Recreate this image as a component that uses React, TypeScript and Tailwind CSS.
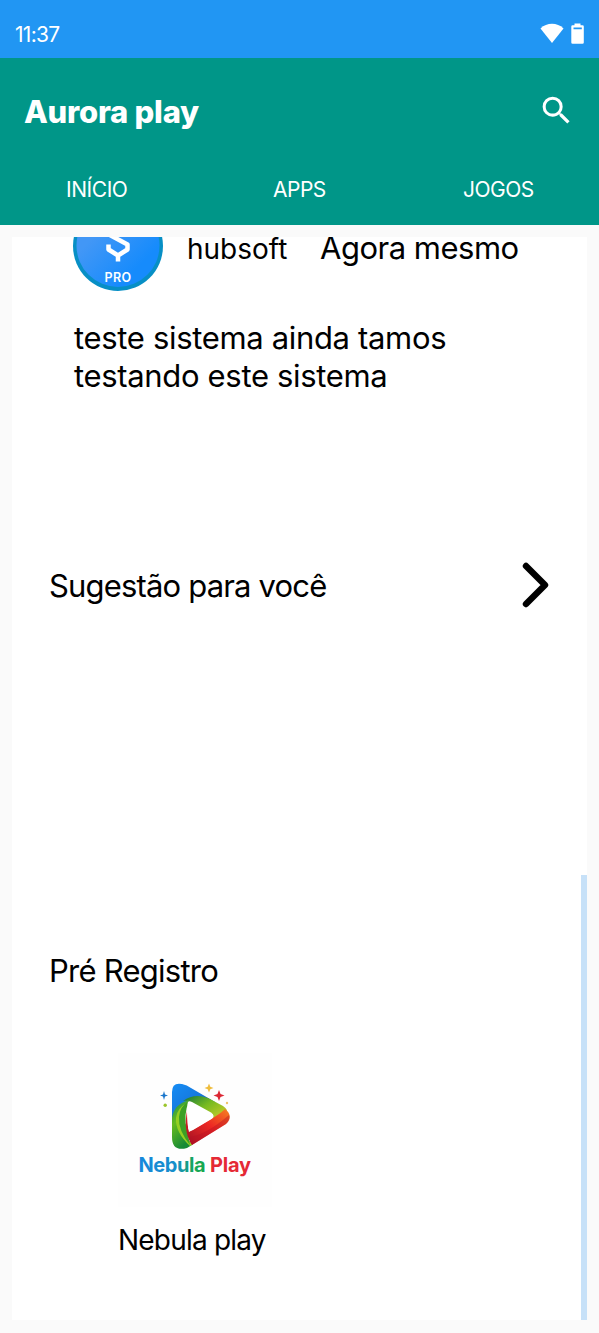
import { MdSearch } from "react-icons/md"

const tabs = [
  { id: "home", label: "INÍCIO", className: "pl-[66px] w-[199px] tracking-[-0.45px]" },
  { id: "apps", label: "APPS", className: "pl-[74px] w-[200px] tracking-[-0.5px]" },
  { id: "games", label: "JOGOS", className: "pl-[64px] w-[200px] tracking-[-0.5px]" },
]

function StatusBar() {
  return (
    <div className="flex h-[58px] justify-between bg-[#2196f3] pl-[15px] pr-[15px] pt-5 text-white">
      <span className="text-[21px] leading-[30px] tracking-[-0.7px]">11:37</span>
      <div className="flex gap-[7px] pt-[3px]">
        <svg width="24" height="21" viewBox="0 0 24 21" fill="currentColor">
          <path d="M0.5 5.5C6.8-.7 17.2-.7 23.5 5.5L12 20Z" />
        </svg>
        <svg width="13" height="21" viewBox="0 0 13 21" fill="currentColor">
          <path fillRule="evenodd" d="M3.5 0.5H9.5V2.3H11.5Q12.8 2.3 12.8 3.6V19.4Q12.8 20.7 11.5 20.7H1.6Q.3 20.7.3 19.4V3.6Q.3 2.3 1.6 2.3H3.5ZM2.5 4.5V6.3H10.8V4.5Z" />
        </svg>
      </div>
    </div>
  )
}

function Header() {
  return (
    <header className="h-[167px] bg-[#009688] text-white">
      <div className="flex h-[108px] items-center justify-between pl-6 pr-6">
        <h1 className="text-[31px] font-extrabold leading-10 tracking-[-0.25px]">Aurora play</h1>
        <MdSearch className="mb-[3px] size-[37px]" />
      </div>
      <nav className="mt-px flex">
        {tabs.map((tab) => (
          <button key={tab.id} className={`text-left text-[21px] leading-[46px] ${tab.className}`}>
            {tab.label}
          </button>
        ))}
      </nav>
    </header>
  )
}

function Avatar() {
  return (
    <svg className="size-[90px] shrink-0" viewBox="0 0 90 90">
      <defs>
        <linearGradient id="avatar" x1="0" y1="0" x2="1" y2="1">
          <stop offset="0.3" stopColor="#4297f6" />
          <stop offset="0.75" stopColor="#168bfc" />
        </linearGradient>
      </defs>
      <circle cx="45" cy="45" r="45" fill="#078fc5" />
      <circle cx="45" cy="44.5" r="41.5" fill="url(#avatar)" />
      <path
        d="M35 33L54.5 43.5V48.5L45 54.5L35.5 48.5V43.5M45 54V60.5"
        fill="none"
        stroke="white"
        strokeWidth="4.5"
        strokeLinejoin="round"
      />
      <text x="31.5" y="80.5" fill="white" fontSize="12.5" fontWeight="600" textLength="26.5">
        PRO
      </text>
    </svg>
  )
}

function NebulaLogo() {
  return (
    <svg className="size-[154px] bg-[#fefefe]" viewBox="118 1053 154 154">
      <defs>
        <linearGradient id="blue" x1="0" y1="0" x2="1" y2="1">
          <stop offset="0" stopColor="#168df5" />
          <stop offset="0.5" stopColor="#1677dc" />
          <stop offset="1" stopColor="#143c83" />
        </linearGradient>
        <linearGradient id="green" x1="0" y1="0" x2="0.4" y2="1">
          <stop offset="0" stopColor="#178a55" />
          <stop offset="0.45" stopColor="#66bb20" />
          <stop offset="1" stopColor="#168a36" />
        </linearGradient>
        <linearGradient id="lime" x1="0" y1="0" x2="1" y2="0.8">
          <stop offset="0" stopColor="#14763c" />
          <stop offset="0.5" stopColor="#76ba20" />
          <stop offset="1" stopColor="#c9cc2b" />
        </linearGradient>
        <linearGradient id="red" x1="0" y1="1" x2="1" y2="0">
          <stop offset="0" stopColor="#9d1024" />
          <stop offset="0.55" stopColor="#ed2824" />
          <stop offset="1" stopColor="#f58220" />
        </linearGradient>
        <linearGradient id="wordmark" gradientUnits="userSpaceOnUse" x1="139" y1="0" x2="207" y2="0">
          <stop offset="0" stopColor="#1688dc" />
          <stop offset="0.55" stopColor="#168fc9" />
          <stop offset="0.8" stopColor="#15a65a" />
          <stop offset="1" stopColor="#17a84b" />
        </linearGradient>
      </defs>
      <path d="M172 1120V1092Q172 1082 182 1084Q187 1085 191 1088L215 1102L207 1106L190 1101Q177 1103 172 1120Z" fill="url(#blue)" />
      <path d="M183 1101Q194 1093 208 1098L223 1106Q229 1110 226 1113L213 1120V1115L190 1102Q186 1100 183 1101Z" fill="url(#lime)" />
      <path d="M172 1118Q174 1104 189 1100Q184 1106 185 1117Q184 1135 192 1145L187 1148Q172 1152 172 1137Z" fill="url(#green)" />
      <path d="M187 1103Q179 1112 182 1127Q185 1140 193 1144L190 1146Q175 1132 176 1118Q177 1108 187 1103Z" fill="#94cf23" />
      <path d="M189 1101Q183 1115 187 1130L190 1145Q178 1130 179 1117Q180 1106 189 1101Z" fill="#3c9f25" />
      <path d="M187 1111Q187 1124 189 1132L211 1119Q220 1114 225 1109Q234 1116 226 1124L192 1145Q183 1132 187 1111Z" fill="url(#red)" />
      <path d="M190 1137Q207 1134 229 1115Q231 1120 226 1124L192 1145Q190 1141 190 1137Z" fill="#b90f22" opacity="0.4" />
      <path d="M187.5 1104Q187.5 1100 192 1102L211 1112.5Q216 1116 211.5 1119L193 1130Q188.5 1132 188 1127Z" fill="white" />
      <path d="M164 1091L165 1094.5L168 1095.5L165 1096.5L164 1100L163 1096.5L160 1095.5L163 1094.5Z" fill="#1875cb" />
      <path d="M209 1083.5L210.3 1086.7L213.5 1088L210.3 1089.3L209 1092.5L207.7 1089.3L204.5 1088L207.7 1086.7Z" fill="#efbd3d" />
      <path d="M219 1090L220.5 1094L224.5 1095.5L220.5 1097L219 1101L217.5 1097L213.5 1095.5L217.5 1094Z" fill="#dc2734" />
      <circle cx="165.2" cy="1105.2" r="1.7" fill="#9bc52b" />
      <circle cx="227" cy="1103" r="1.2" fill="#efc36b" />
      <text x="138.5" y="1172" fontSize="20" fontWeight="700" textLength="67" fill="url(#wordmark)">
        Nebula
      </text>
      <text x="210" y="1172" fontSize="20" fontWeight="700" textLength="41" fill="#e52935">
        Play
      </text>
    </svg>
  )
}

function Post() {
  return (
    <article className="-mt-9 h-[321px] pl-[61px]">
      <div className="flex">
        <Avatar />
        <span className="ml-6 mt-9 h-6 w-[133px] text-[28px] leading-6">hubsoft</span>
        <span className="mt-9 h-6 whitespace-nowrap text-[31px] leading-[22px] tracking-[-0.5px]">Agora mesmo</span>
      </div>
      <p className="mt-7 w-[420px] pl-px text-[31px] leading-[38px] tracking-[-0.33px]">
        teste sistema ainda tamos
        <br />
        testando este sistema
      </p>
    </article>
  )
}

export default function App() {
  return (
    <div className="h-[1333px] w-[599px] overflow-hidden bg-[#fafafa] font-['Inter',sans-serif] text-black">
      <StatusBar />
      <Header />
      <main className="mx-3 mt-3 flex h-[1083px] overflow-hidden bg-white">
        <div className="w-[569px]">
          <Post />
          <section className="flex h-[385px] justify-between pl-[37px] pr-[31px] pt-10">
            <h2 className="h-10 whitespace-nowrap pt-1 text-[31px] leading-10 tracking-[-0.83px]">Sugestão para você</h2>
            <svg className="h-[46px] w-7" viewBox="0 0 28 46" fill="none">
              <path d="M4 4L23 23L4 42" stroke="black" strokeWidth="6.4" strokeLinecap="round" strokeLinejoin="round" />
            </svg>
          </section>
          <section className="pl-[37px] pt-11">
            <h2 className="text-[31px] leading-10 tracking-[-0.75px]">Pré Registro</h2>
            <div className="ml-[69px] mt-[62px] w-[154px]">
              <NebulaLogo />
              <p className="mt-[13px] whitespace-nowrap text-[28px] leading-10 tracking-[-0.8px]">Nebula play</p>
            </div>
          </section>
        </div>
        <div className="mt-[638px] h-[446px] w-[6px] bg-[#c7e1f8]" />
      </main>
    </div>
  )
}
